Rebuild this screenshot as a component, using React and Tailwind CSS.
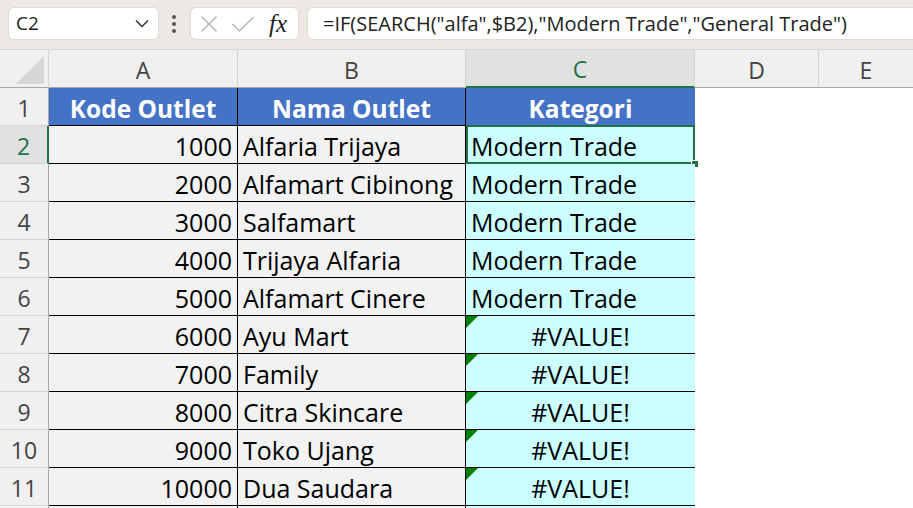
import React from "react";

const rows = [
  { n: 2, code: "1000", name: "Alfaria Trijaya", cat: "Modern Trade" },
  { n: 3, code: "2000", name: "Alfamart Cibinong", cat: "Modern Trade" },
  { n: 4, code: "3000", name: "Salfamart", cat: "Modern Trade" },
  { n: 5, code: "4000", name: "Trijaya Alfaria", cat: "Modern Trade" },
  { n: 6, code: "5000", name: "Alfamart Cinere", cat: "Modern Trade" },
  { n: 7, code: "6000", name: "Ayu Mart", cat: "#VALUE!" },
  { n: 8, code: "7000", name: "Family", cat: "#VALUE!" },
  { n: 9, code: "8000", name: "Citra Skincare", cat: "#VALUE!" },
  { n: 10, code: "9000", name: "Toko Ujang", cat: "#VALUE!" },
  { n: 11, code: "10000", name: "Dua Saudara", cat: "#VALUE!" },
];

const RowHead = ({ n, active }) => (
  <div
    className={
      active
        ? "w-[49px] h-full flex items-center justify-center pt-[3px] bg-[#e1e1e1] text-[#217346] border-r-2 border-r-[#217346] border-b border-b-[#d4d4d4] text-[23px]"
        : "w-[49px] h-full flex items-center justify-center pt-[3px] bg-[#f0f0f0] text-[#444] border-r border-r-[#a8a8a8] border-b border-b-[#d4d4d4] text-[23px]"
    }
  >
    {n}
  </div>
);

const FormulaBar = () => (
  <div className="h-[50px] bg-[#ece9e4] flex items-start pt-[7px] border-b border-[#d9d6d1]">
    {/* Name box */}
    <div className="ml-[8px] w-[151px] h-[33px] rounded-[6px] bg-white border border-[#dedad4] flex items-center justify-between pl-[7px] pr-[9px]">
      <span className="text-[19px] text-[#222]">C2</span>
      <svg width="14" height="9" viewBox="0 0 14 9">
        <path d="M1 1.5 L7 7.5 L13 1.5" fill="none" stroke="#333" strokeWidth="1.5" />
      </svg>
    </div>
    {/* Dots */}
    <div className="ml-[12px] w-[6px] h-[33px] flex flex-col items-center justify-center gap-[3px]">
      <span className="w-[4px] h-[4px] rounded-full bg-[#555]"></span>
      <span className="w-[4px] h-[4px] rounded-full bg-[#555]"></span>
      <span className="w-[4px] h-[4px] rounded-full bg-[#555]"></span>
    </div>
    {/* Cancel / enter / fx */}
    <div className="ml-[13px] w-[109px] h-[33px] rounded-[6px] bg-white border border-[#dedad4] flex items-center pl-[9px]">
      <svg width="18" height="18" viewBox="0 0 18 18">
        <path d="M1.5 1.5 L16.5 16.5 M16.5 1.5 L1.5 16.5" stroke="#b4b4b4" strokeWidth="1.4" fill="none" />
      </svg>
      <svg width="24" height="18" viewBox="0 0 24 18" className="ml-[13px]">
        <path d="M1.5 9 L8.5 16 L22.5 2" stroke="#b4b4b4" strokeWidth="1.4" fill="none" />
      </svg>
      <span className="ml-[14px] text-[25px] italic leading-none text-[#222] font-['Liberation_Serif',serif]">fx</span>
    </div>
    {/* Formula */}
    <div className="ml-[8px] flex-1 h-[33px] rounded-l-[6px] bg-white border border-r-0 border-[#dedad4] flex items-center pl-[15px]">
      <span className="text-[20px] text-[#222] whitespace-nowrap">
        =IF(SEARCH("alfa",$B2),"Modern Trade","General Trade")
      </span>
    </div>
  </div>
);

const ColHeaders = () => (
  <div className="h-[38px] flex text-[23px] text-[#444]">
    <div className="w-[49px] h-full bg-[#f0f0f0] border-r border-r-[#d4d4d4] border-b border-b-[#a8a8a8] flex items-end justify-end">
      <svg width="49" height="37" viewBox="0 0 49 37">
        <polygon points="16,34 45,34 45,6" fill="#d6d6d6" />
      </svg>
    </div>
    <div className="w-[189px] h-full pt-[3px] bg-[#f0f0f0] border-r border-r-[#d4d4d4] border-b border-b-[#a8a8a8] flex items-center justify-center">A</div>
    <div className="w-[228px] h-full pt-[3px] bg-[#f0f0f0] border-r border-r-[#d4d4d4] border-b border-b-[#a8a8a8] flex items-center justify-center">B</div>
    <div className="w-[229px] h-full pt-[3px] bg-[#e1e1e1] border-r border-r-[#d4d4d4] border-b-2 border-b-[#217346] text-[#217346] flex items-center justify-center">C</div>
    <div className="w-[124px] h-full pt-[3px] bg-[#f0f0f0] border-r border-r-[#d4d4d4] border-b border-b-[#a8a8a8] flex items-center justify-center">D</div>
    <div className="flex-1 h-full pt-[3px] bg-[#f0f0f0] border-b border-b-[#a8a8a8] flex items-center justify-center">E</div>
  </div>
);

export default function App() {
  return (
    <div className="w-[913px] h-[508px] overflow-hidden bg-white font-['Open_Sans',sans-serif]">
      <FormulaBar />
      <ColHeaders />

      {/* Row 1: table header */}
      <div className="h-[38px] flex">
        <RowHead n={1} />
        <div className="w-[189px] h-full pt-[5px] bg-[#4472c4] border-r border-b border-black flex items-center justify-center text-white font-bold text-[24.5px]">Kode Outlet</div>
        <div className="w-[228px] h-full pt-[5px] bg-[#4472c4] border-r border-b border-black flex items-center justify-center text-white font-bold text-[24.5px]">Nama Outlet</div>
        <div className="w-[229px] h-full pt-[5px] bg-[#4472c4] border-b border-black flex items-center justify-center text-white font-bold text-[24.5px]">Kategori</div>
        <div className="flex-1"></div>
      </div>

      {rows.map((r) => {
        const err = r.cat === "#VALUE!";
        const active = r.n === 2;
        return (
          <div key={r.n} className="h-[38px] flex text-[25px] text-black">
            <RowHead n={r.n} active={active} />
            <div className="w-[189px] h-full pt-[5px] bg-[#f2f2f2] border-r border-b border-black flex items-center justify-end pr-[5px]">{r.code}</div>
            <div className="w-[228px] h-full pt-[5px] bg-[#f2f2f2] border-r border-b border-black flex items-center pl-[5px] whitespace-nowrap">{r.name}</div>
            <div
              className={
                "relative w-[229px] h-full pt-[5px] bg-[#ccffff] border-b border-black flex items-center whitespace-nowrap " +
                (err ? "justify-center" : "pl-[5px]")
              }
            >
              {err && (
                <svg className="absolute left-0 top-0" width="12" height="12" viewBox="0 0 12 12">
                  <polygon points="0,0 12,0 0,12" fill="#008000" />
                </svg>
              )}
              {active && (
                <>
                  <div className="absolute left-0 top-[-1px] w-[229px] h-[39px] border-2 border-[#217346]"></div>
                  <div className="absolute right-[-4px] bottom-[-5px] w-[8px] h-[8px] bg-[#217346] border border-white"></div>
                </>
              )}
              <span className="relative">{r.cat}</span>
            </div>
            <div className="flex-1"></div>
          </div>
        );
      })}

      {/* Row 12 (only its top edge is visible) */}
      <div className="h-[38px] flex">
        <div className="w-[49px] h-full bg-[#f0f0f0] border-r border-r-[#a8a8a8]"></div>
        <div className="w-[189px] h-full bg-[#f2f2f2] border-r border-black"></div>
        <div className="w-[228px] h-full bg-[#f2f2f2] border-r border-black"></div>
        <div className="w-[229px] h-full bg-[#ccffff]"></div>
        <div className="flex-1"></div>
      </div>
    </div>
  );
}
